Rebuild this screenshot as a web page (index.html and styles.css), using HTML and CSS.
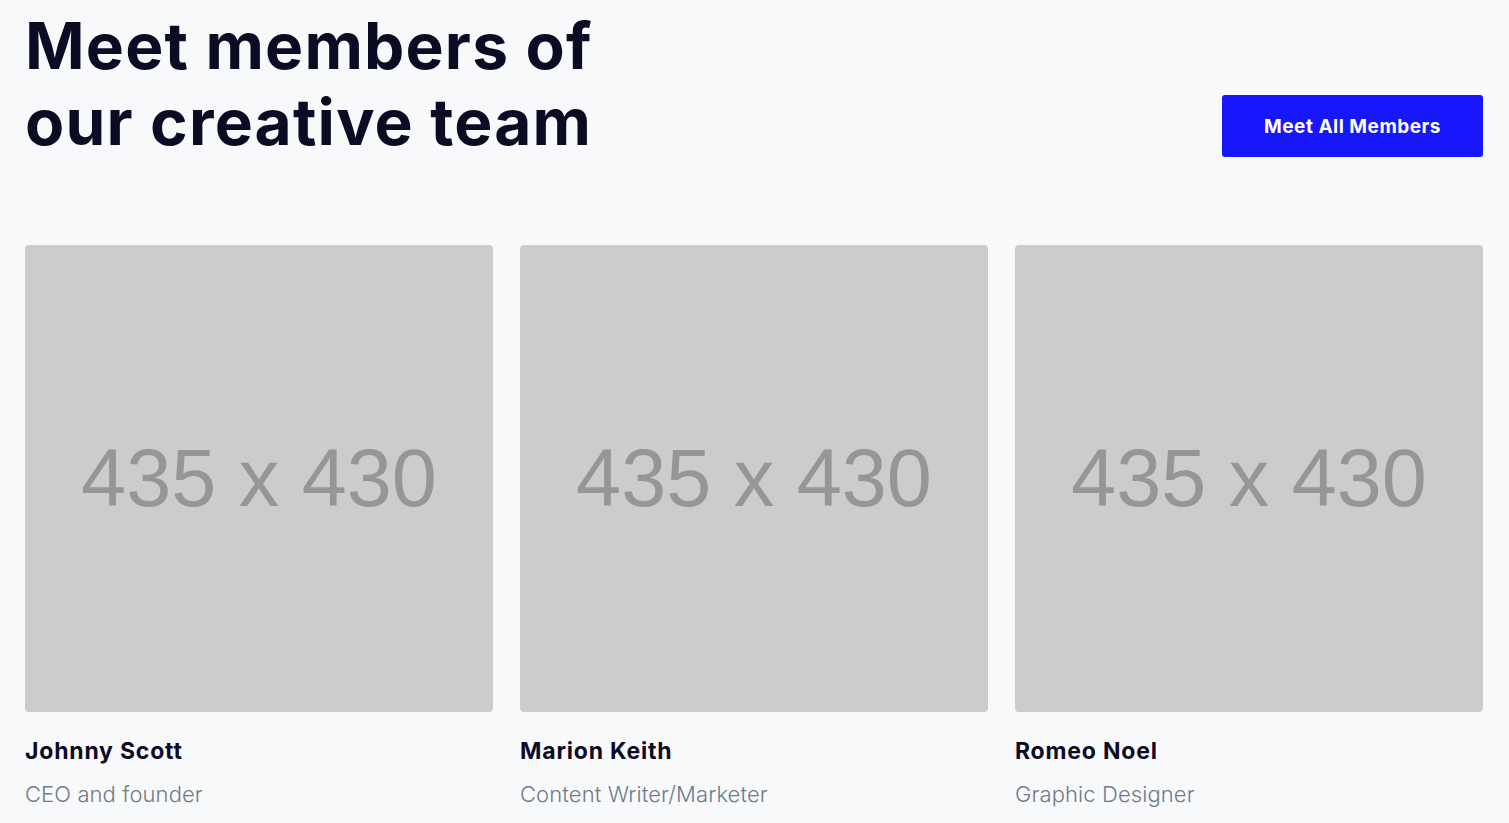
FILE: index.html
```html
<!DOCTYPE html>
<html lang="en">
<head>
<meta charset="utf-8">
<title>Team</title>
<link rel="stylesheet" href="styles.css">
</head>
<body>
<section class="team">
  <div class="team-head">
    <h1 class="team-title">Meet members of<br>our creative team</h1>
    <a class="btn" href="#">Meet All Members</a>
  </div>
  <div class="team-grid">
    <div class="member">
      <div class="photo"><span>435 x 430</span></div>
      <h3 class="name">Johnny Scott</h3>
      <p class="role">CEO and founder</p>
    </div>
    <div class="member">
      <div class="photo"><span>435 x 430</span></div>
      <h3 class="name">Marion Keith</h3>
      <p class="role">Content Writer/Marketer</p>
    </div>
    <div class="member">
      <div class="photo"><span>435 x 430</span></div>
      <h3 class="name">Romeo Noel</h3>
      <p class="role">Graphic Designer</p>
    </div>
  </div>
</section>
</body>
</html>
```
FILE: styles.css
```css
* { box-sizing: border-box; }
html, body {
  margin: 0;
  background: #f8f9fb;
  font-family: Inter, "Noto Sans", sans-serif;
  color: #0b0b24;
}
.team {
  padding: 8px 26px 0 25px;
}
.team-head {
  display: flex;
  justify-content: space-between;
  align-items: flex-start;
}
.team-title {
  margin: 0;
  font-size: 64px;
  line-height: 76px;
  font-weight: 700;
  letter-spacing: 1.2px;
  color: #0b0b24;
}
.btn {
  margin-top: 87px;
  display: flex;
  align-items: center;
  justify-content: center;
  width: 261px;
  height: 62px;
  background: #1717fb;
  color: #fff;
  border-radius: 3px;
  font-size: 19px;
  font-weight: 700;
  letter-spacing: 0.5px;
  text-decoration: none;
}
.team-grid {
  margin-top: 85px;
  display: grid;
  grid-template-columns: repeat(3, 1fr);
  column-gap: 27px;
}
.photo {
  height: 467px;
  background: #cccccc;
  border-radius: 4px;
  display: flex;
  align-items: center;
  justify-content: center;
}
.photo span {
  font-family: "Liberation Sans", Arial, sans-serif;
  font-size: 81px;
  color: #969696;
  line-height: 1;
}
.name {
  margin: 24px 0 0;
  font-size: 23px;
  line-height: 30px;
  font-weight: 700;
  letter-spacing: 0.8px;
  color: #0b0b24;
}
.role {
  margin: 13px 0 0;
  font-size: 22px;
  line-height: 30px;
  font-weight: 300;
  letter-spacing: 0.1px;
  color: #6f7b88;
}
```
